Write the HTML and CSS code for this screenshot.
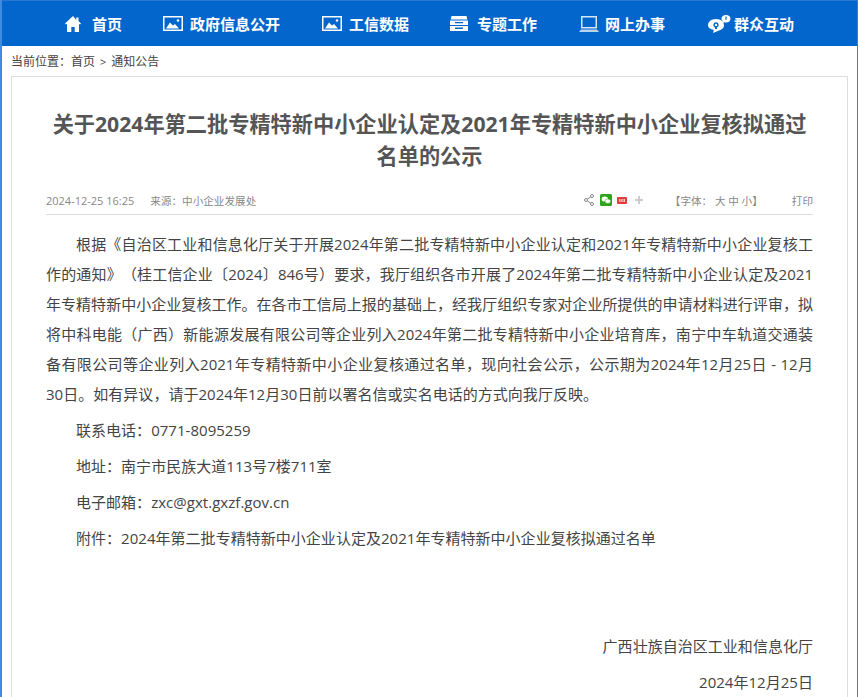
FILE: index.html
```html
<!DOCTYPE html>
<html lang="zh-CN">
<head>
<meta charset="utf-8">
<title>通知公告</title>
<link rel="stylesheet" href="styles.css">
</head>
<body>
<nav class="nav">
  <a class="nav-item nav-home"><svg class="ico" width="16" height="16" viewBox="0 0 16 16"><path fill="#fff" d="M8 0 0 7.500l1 1L2 7.700V16h4.300v-5h3.400v5H14V7.700l1 .8 1-1-2.500-2.400V1.500h-2.200v2.500z"/></svg>首页</a>
  <a class="nav-item nav-gov"><svg class="ico" width="20" height="15" viewBox="0 0 20 15"><rect x=".75" y=".75" width="18.500" height="13.500" fill="none" stroke="#fff" stroke-width="1.500"/><path fill="#fff" d="M3 12.500 7 6.500l3 3 2-1.500 4 4.500z"/><circle cx="15" cy="4.500" r="1.300" fill="#fff"/></svg>政府信息公开</a>
  <a class="nav-item nav-data"><svg class="ico" width="20" height="15" viewBox="0 0 20 15"><rect x=".75" y=".75" width="18.500" height="13.500" fill="none" stroke="#fff" stroke-width="1.500"/><path fill="#fff" d="M3 12.500 7 6.500l3 3 2-1.500 4 4.500z"/><circle cx="15" cy="4.500" r="1.300" fill="#fff"/></svg>工信数据</a>
  <a class="nav-item nav-topic"><svg class="ico" width="18" height="15" viewBox="0 0 18 15"><path fill="#fff" d="M1.500 0h15l.8 3.500H.7z"/><path fill="#fff" fill-rule="evenodd" d="M0 4.500h18V9H0zM5 6v1.300h8V6zM0 10h18v5H0zM5 11.500v1.500h8v-1.500z"/></svg>专题工作</a>
  <a class="nav-item nav-online"><svg class="ico" width="20" height="16" viewBox="0 0 20 16"><rect x="2.750" y=".75" width="14.500" height="11" fill="none" stroke="#d5e5f8" stroke-width="1.500"/><path fill="#b9d2f0" d="M2 13.500h16l2 2.500H0z"/></svg>网上办事</a>
  <a class="nav-item nav-public"><svg class="ico" width="24" height="18" viewBox="0 0 24 18"><path fill="#fff" fill-rule="evenodd" d="M9 4c4.700 0 8 2.800 8 6.300 0 2.700-2.400 4.700-5.500 5.400L6 18l.9-3C3 14.300 1 12.400 1 10.300 1 6.800 4.300 4 9 4zm0 3.200a2.700 2.700 0 0 0-1 5.200V14h2v-1.600a2.700 2.700 0 0 0-1-5.200zm0 1.500a1.200 1.200 0 1 1 0 2.400 1.200 1.200 0 0 1 0-2.400z"/><path fill="#fff" fill-rule="evenodd" d="M19 0c2.700 0 4.500 1.700 4.500 3.800S21.700 7.600 19 7.600c-.6 0-1.200-.1-1.700-.3L15 8.500l.6-2.300C14.900 5.500 14.500 4.700 14.500 3.800 14.500 1.700 16.300 0 19 0zm-.6 1.500v3.300h1.200V1.500z"/></svg>群众互动</a>
</nav>
<div class="crumb">当前位置：<a>首页</a><span class="sep">&gt;</span><a>通知公告</a></div>
<main class="panel">
  <h1 class="title">关于2024年第二批专精特新中小企业认定及2021年专精特新中小企业复核拟通过名单的公示</h1>
  <div class="meta">
    <span class="date">2024-12-25 16:25</span>
    <span class="source">来源：中小企业发展处</span>
    <span class="tools">
      <svg class="share" width="10" height="12" viewBox="0 0 10 12"><path fill="none" stroke="#888" d="M8 2 2 6l6 4"/><circle cx="8" cy="2" r="1.500" fill="#fff" stroke="#888"/><circle cx="2" cy="6" r="1.500" fill="#fff" stroke="#888"/><circle cx="8" cy="10" r="1.500" fill="#fff" stroke="#888"/></svg>
      <svg width="12" height="12" viewBox="0 0 12 12"><rect width="12" height="12" rx="1.500" fill="#2fa31b"/><ellipse cx="4.800" cy="5" rx="3.200" ry="2.600" fill="#fff"/><ellipse cx="7.800" cy="7.200" rx="2.800" ry="2.200" fill="#fff" stroke="#2fa31b" stroke-width=".5"/></svg>
      <svg width="10" height="7" viewBox="0 0 10 7"><rect width="10" height="7" rx="1" fill="#e63b3b"/><path fill="#fbc8c8" d="M2 2h1.500v3H2zM4.300 2h1.400v3H4.300zM6.500 2H8v3H6.500z"/></svg>
      <svg class="plus" width="8" height="8" viewBox="0 0 8 8"><path fill="#ccc" d="M3 0h2v3h3v2H5v3H3V5H0V3h3z"/></svg>
    </span>
    <span class="font-size">【字体： 大 中 小】</span>
    <span class="print">打印</span>
  </div>
  <article class="body">
    <p class="lead">根据《自治区工业和信息化厅关于开展2024年第二批专精特新中小企业认定和2021年专精特新中小企业复核工作的通知》（桂工信企业〔2024〕846号）要求，我厅组织各市开展了2024年第二批专精特新中小企业认定及2021年专精特新中小企业复核工作。在各市工信局上报的基础上，经我厅组织专家对企业所提供的申请材料进行评审，拟将中科电能（广西）新能源发展有限公司等企业列入2024年第二批专精特新中小企业培育库，南宁中车轨道交通装备有限公司等企业列入2021年专精特新中小企业复核通过名单，现向社会公示，公示期为2024年12月25日 - 12月<span class="nobreak">30日</span>。如有异议，请于2024年12月30日前以署名信或实名电话的方式向我厅反映。</p>
    <p class="lead">联系电话：0771-8095259</p>
    <p class="lead">地址：南宁市民族大道113号7楼711室</p>
    <p class="lead">电子邮箱：zxc@gxt.gxzf.gov.cn</p>
    <p class="lead">附件：2024年第二批专精特新中小企业认定及2021年专精特新中小企业复核拟通过名单</p>
    <p class="sign sign-org">广西壮族自治区工业和信息化厅</p>
    <p class="sign">2024年12月25日</p>
  </article>
</main>
</body>
</html>
```
FILE: styles.css
```css
* { box-sizing: border-box; }
html, body { height: 100%; }
body {
  margin: 0;
  height: 697px;
  overflow: hidden;
  background: #fff;
  color: #444;
  font-family: "Open Sans", "Noto Sans CJK SC", sans-serif;
  text-spacing-trim: space-all;
  border-left: 2px solid #3d8be2;
  border-right: 1px solid #3a7fd5;
}
.nav {
  height: 46px;
  background: #0366cc;
  border-top: 1px solid #2a78d2;
  display: flex;
  align-items: center;
  padding-left: 63px;
  color: #fff;
  font-size: 15px;
  font-weight: 700;
}
.nav-item { display: flex; align-items: center; white-space: nowrap; }
.ico { flex: none; }
.nav-home { width: 98px; gap: 11px; }
.nav-gov { width: 159px; gap: 7px; }
.nav-data { width: 128px; gap: 7px; }
.nav-topic { width: 129px; gap: 9px; }
.nav-online { width: 128px; gap: 6px; }
.nav-public { gap: 3px; }
.crumb {
  height: 30px;
  padding: 7px 0 0 9px;
  font-size: 12px;
  line-height: 18px;
  color: #444;
}
.sep { margin: 0 5px; font-size: 11px; }
.panel {
  margin: 0 9px;
  border: 1px solid #ddd;
  border-bottom: 0;
  padding: 31px 34px 0;
  height: 640px;
}
.title {
  margin: 0;
  font-size: 21.200px;
  line-height: 32px;
  font-weight: 700;
  text-align: center;
  color: #555;
}
.meta {
  margin-top: 14px;
  height: 29px;
  display: flex;
  align-items: center;
  font-size: 10.600px;
  color: #888;
  border-bottom: 1px solid #ddd;
}
.date { font-size: 11px; }
.source { margin-left: 16px; }
.tools { margin-left: auto; display: flex; align-items: center; gap: 5px; }
.share { margin-right: 1px; }
.plus { margin-left: 3px; }
.font-size { margin-left: 27px; }
.print { margin-left: 29px; }
.body { padding-top: 14px; font-size: 15px; letter-spacing: .03px; color: #444; }
.body p { margin: 0 0 6px; line-height: 30px; text-align: justify; }
.nobreak { white-space: nowrap; }
.lead { text-indent: 30px; }
.body .sign { text-align: right; }
.body .sign-org { margin-top: 78px; }
```
